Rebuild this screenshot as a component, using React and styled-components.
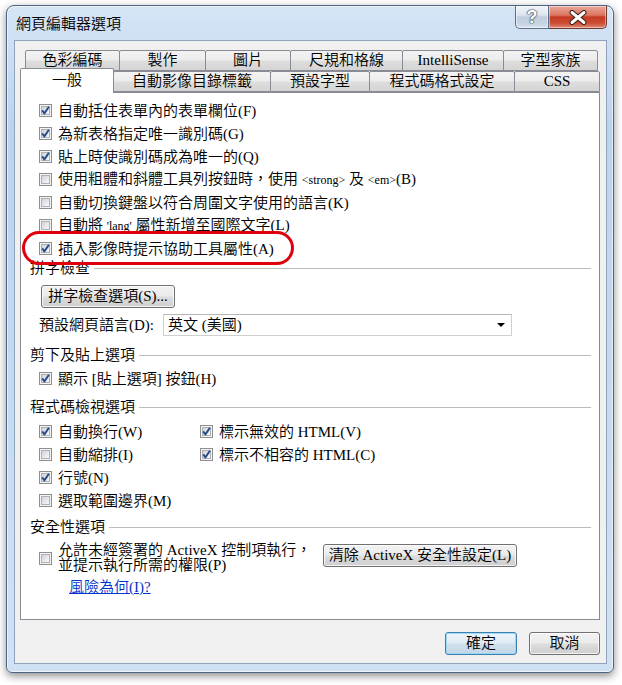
import React from 'react';
import styled, { createGlobalStyle } from 'styled-components';

const Global = createGlobalStyle`
  html, body { margin: 0; padding: 0; background: #ffffff; }
  body {
    font-family: "Liberation Serif", "Noto Sans CJK TC DemiLight", "Noto Sans CJK TC Light", "Noto Sans CJK TC", serif;
    font-size: 15px;
    font-weight: 400;
    color: #000;
  }
  * { box-sizing: border-box; }
`;

const Page = styled.div`
  width: 622px;
  height: 685px;
  padding: 5px 0 0 6px;
`;

const Window = styled.div`
  width: 608px;
  height: 668px;
  border: 1px solid #4c6482;
  border-radius: 8px 8px 6px 6px;
  background: linear-gradient(180deg, #d6e5f6 0%, #bcd3ee 18%, #c6daf1 60%, #d0e1f4 100%);
  box-shadow: 0 3px 9px rgba(0, 0, 0, 0.45), inset 0 0 0 1px rgba(255, 255, 255, 0.6);
  display: flex;
  flex-direction: column;
`;

const TitleBar = styled.div`
  height: 34px;
  display: flex;
  align-items: flex-start;
  padding: 0 6px 0 9px;
`;

const Title = styled.div`
  flex: 1;
  margin-top: 10px;
  line-height: 16px;
  font-size: 15px;
  color: #000;
`;

const CaptionButton = styled.div`
  width: ${(p) => p.$w}px;
  height: 23px;
  display: flex;
  align-items: center;
  justify-content: center;
  border: 1px solid ${(p) => (p.$close ? '#6d3a30' : '#5e7089')};
  border-top: none;
  border-left: ${(p) => (p.$close ? 'none' : undefined)};
  border-radius: ${(p) => (p.$close ? '0 0 5px 0' : '0 0 0 5px')};
  background: ${(p) =>
    p.$close
      ? 'linear-gradient(180deg, #eaa99b 0%, #dc7460 42%, #c63a22 50%, #cc4d35 78%, #e08a74 100%)'
      : 'linear-gradient(180deg, #f1f5fa 0%, #dbe4ee 42%, #bfcddd 50%, #c7d4e3 80%, #dbe5f0 100%)'};
  box-shadow: inset 0 0 0 1px rgba(255, 255, 255, 0.45);
`;

const HelpGlyph = styled.span`
  font-family: "Liberation Sans", sans-serif;
  font-weight: bold;
  font-size: 18px;
  line-height: 18px;
  color: #fff;
  text-shadow: 0 0 1px #2f3d52, 0 0 1px #2f3d52, 0 0 2px #2f3d52;
`;

const Client = styled.div`
  margin: 0 6px 0 7px;
  height: 624px;
  border: 1px solid #8fa3bd;
  background: #f0f0f0;
  padding: 9px 6px 0 5px;
  display: flex;
  flex-direction: column;
`;

const TabStrip = styled.div`
  height: 42px;
  display: flex;
  flex-direction: column;
`;

const TabRow = styled.div`
  height: 21px;
  display: flex;
  align-items: flex-end;
  padding-left: ${(p) => p.$indent}px;
`;

const Tab = styled.div`
  flex: none;
  width: ${(p) => p.$w}px;
  height: ${(p) => (p.$active ? 25 : 21)}px;
  margin-left: ${(p) => (p.$first ? 0 : -1)}px;
  margin-bottom: ${(p) => (p.$active ? -1 : 0)}px;
  border: 1px solid #898c95;
  border-bottom: ${(p) => (p.$active ? 'none' : '1px solid #898c95')};
  border-radius: 2px 2px 0 0;
  background: ${(p) =>
    p.$active
      ? '#ffffff'
      : 'linear-gradient(180deg, #f3f3f3 0%, #ececec 48%, #dedede 52%, #d4d4d4 100%)'};
  position: relative;
  z-index: ${(p) => (p.$active ? 3 : 1)};
  text-align: center;
  line-height: ${(p) => (p.$active ? 22 : 19)}px;
  font-size: 15px;
  white-space: nowrap;
`;

const Panel = styled.div`
  position: relative;
  z-index: 0;
  height: 528px;
  border: 1px solid #898c95;
  background: #ffffff;
  padding: 6px 8px 0 18px;
  display: flex;
  flex-direction: column;
`;

const CheckRow = styled.label`
  height: 23px;
  display: flex;
  align-items: center;
  gap: 6px;
  line-height: 16px;
  white-space: nowrap;
`;

const BoxWrap = styled.span`
  flex: none;
  width: 13px;
  height: 13px;
  display: block;
`;

const Small = styled.span`
  font-size: 12px;
`;

const Header = styled.div`
  height: 16px;
  margin: ${(p) => p.$mt || 0}px 0 0 -9px;
  display: flex;
  align-items: center;
  line-height: 16px;
  white-space: nowrap;
`;

const HeaderLine = styled.div`
  flex: 1;
  height: 1px;
  margin-left: 4px;
  background: #bcbcbc;
`;

const Button = styled.button`
  flex: none;
  width: ${(p) => p.$w}px;
  height: 23px;
  padding: 0;
  margin: ${(p) => p.$m || '0'};
  border: 1px solid ${(p) => (p.$default ? '#3c7fb1' : '#707070')};
  border-radius: 3px;
  background: ${(p) =>
    p.$default
      ? 'linear-gradient(180deg, #edf5fb 0%, #dfebf5 48%, #cfdfec 52%, #c4d7e7 100%)'
      : 'linear-gradient(180deg, #f2f2f2 0%, #ebebeb 48%, #dddddd 52%, #cfcfcf 100%)'};
  box-shadow: ${(p) =>
    p.$default
      ? 'inset 0 0 0 1px rgba(150, 215, 245, 0.9)'
      : 'inset 0 0 0 1px rgba(255, 255, 255, 0.75)'};
  font-family: inherit;
  font-size: 15px;
  font-weight: inherit;
  line-height: 19px;
  color: #000;
  white-space: nowrap;
`;

const LangRow = styled.div`
  margin-top: 6px;
  height: 22px;
  display: flex;
  align-items: center;
`;

const LangLabel = styled.div`
  width: 124px;
  line-height: 16px;
  white-space: nowrap;
`;

const Select = styled.div`
  width: 349px;
  height: 22px;
  border: 1px solid #cfcfcf;
  border-top-color: #b7b7b7;
  background: #fff;
  display: flex;
  align-items: center;
  justify-content: space-between;
  padding: 0 6px 0 4px;
  line-height: 16px;
`;

const Arrow = styled.span`
  width: 0;
  height: 0;
  border-left: 4px solid transparent;
  border-right: 4px solid transparent;
  border-top: 4px solid #000;
`;

const CodeGrid = styled.div`
  margin-top: 5px;
  display: grid;
  grid-template-columns: 161px auto;
  grid-auto-rows: 23px;
`;

const ActiveXRow = styled.div`
  margin-top: 8px;
  display: flex;
  align-items: flex-start;
`;

const ActiveXCheck = styled.label`
  display: flex;
  align-items: center;
  gap: 6px;
`;

const TwoLine = styled.div`
  width: 259px;
  line-height: 15px;
  white-space: nowrap;
`;

const Link = styled.a`
  margin: 7px 0 0 30px;
  line-height: 15px;
  color: #0033cc;
  text-decoration: underline;
  align-self: flex-start;
  cursor: pointer;
`;

const Annotation = styled.div`
  position: absolute;
  left: 1px;
  top: 138px;
  width: 272px;
  height: 34px;
  border: 3px solid #e0000c;
  border-radius: 17px;
  pointer-events: none;
`;

const ButtonRow = styled.div`
  margin-top: 12px;
  display: flex;
  justify-content: flex-end;
  gap: 12px;
`;

function CheckBox({ checked }) {
  return (
    <BoxWrap>
      <svg width="13" height="13" viewBox="0 0 13 13">
        <defs>
          <linearGradient id="cbgrad" x1="0" y1="0" x2="1" y2="1">
            <stop offset="0" stopColor="#cdd1d7" />
            <stop offset="1" stopColor="#fbfbfb" />
          </linearGradient>
        </defs>
        <rect x="0.5" y="0.5" width="12" height="12" fill="#f3f3f3" stroke="#8e8f8f" />
        <rect x="2.5" y="2.5" width="8" height="8" fill="url(#cbgrad)" stroke="#aeb2b8" />
        {checked && (
          <path
            d="M3.2 6.4 L5.4 9.4 L9.9 2.8"
            fill="none"
            stroke="#2a4a86"
            strokeWidth="1.9"
            strokeLinejoin="round"
          />
        )}
      </svg>
    </BoxWrap>
  );
}

function Option({ checked, children }) {
  return (
    <CheckRow>
      <CheckBox checked={checked} />
      <span>{children}</span>
    </CheckRow>
  );
}

const row1 = [
  { t: '色彩編碼', w: 95 },
  { t: '製作', w: 87 },
  { t: '圖片', w: 86 },
  { t: '尺規和格線', w: 113 },
  { t: 'IntelliSense', w: 102 },
  { t: '字型家族', w: 95 },
];

const row2 = [
  { t: '一般', w: 94, active: true },
  { t: '自動影像目錄標籤', w: 158 },
  { t: '預設字型', w: 100 },
  { t: '程式碼格式設定', w: 146 },
  { t: 'CSS', w: 86 },
];

export default function App() {
  return (
    <Page>
      <Global />
      <Window>
        <TitleBar>
          <Title>網頁編輯器選項</Title>
          <CaptionButton $w={34}>
            <HelpGlyph>?</HelpGlyph>
          </CaptionButton>
          <CaptionButton $w={58} $close>
            <svg width="20" height="15" viewBox="0 0 20 15">
              <path d="M4 2.5 L16 12.5 M16 2.5 L4 12.5" stroke="#3a1a14" strokeWidth="5" strokeLinecap="round" />
              <path d="M4 2.5 L16 12.5 M16 2.5 L4 12.5" stroke="#ffffff" strokeWidth="3" strokeLinecap="round" />
            </svg>
          </CaptionButton>
        </TitleBar>
        <Client>
          <TabStrip>
            <TabRow $indent={5}>
              {row1.map((t, i) => (
                <Tab key={t.t} $w={t.w} $first={i === 0}>
                  {t.t}
                </Tab>
              ))}
            </TabRow>
            <TabRow $indent={0}>
              {row2.map((t, i) => (
                <Tab key={t.t} $w={t.w} $first={i === 0} $active={t.active}>
                  {t.t}
                </Tab>
              ))}
            </TabRow>
          </TabStrip>
          <Panel>
            <Option checked>自動括住表單內的表單欄位(F)</Option>
            <Option checked>為新表格指定唯一識別碼(G)</Option>
            <Option checked>貼上時使識別碼成為唯一的(Q)</Option>
            <Option>
              使用粗體和斜體工具列按鈕時，使用 <Small>&lt;strong&gt;</Small> 及 <Small>&lt;em&gt;</Small>(B)
            </Option>
            <Option>自動切換鍵盤以符合周圍文字使用的語言(K)</Option>
            <Option>
              自動將 <Small>'lang'</Small> 屬性新增至國際文字(L)
            </Option>
            <Option checked>插入影像時提示協助工具屬性(A)</Option>

            <Header>
              拼字檢查
              <HeaderLine />
            </Header>
            <Button $w={134} $m="9px 0 0 2px">
              拼字檢查選項(S)...
            </Button>
            <LangRow>
              <LangLabel>預設網頁語言(D):</LangLabel>
              <Select>
                <span>英文 (美國)</span>
                <Arrow />
              </Select>
            </LangRow>

            <Header $mt={11}>
              剪下及貼上選項
              <HeaderLine />
            </Header>
            <CheckRow style={{ marginTop: 4 }}>
              <CheckBox checked />
              <span>顯示 [貼上選項] 按鈕(H)</span>
            </CheckRow>

            <Header $mt={9}>
              程式碼檢視選項
              <HeaderLine />
            </Header>
            <CodeGrid>
              <Option checked>自動換行(W)</Option>
              <Option checked>標示無效的 HTML(V)</Option>
              <Option>自動縮排(I)</Option>
              <Option checked>標示不相容的 HTML(C)</Option>
              <Option checked>行號(N)</Option>
              <span />
              <Option>選取範圍邊界(M)</Option>
            </CodeGrid>

            <Header $mt={7}>
              安全性選項
              <HeaderLine />
            </Header>
            <ActiveXRow>
              <ActiveXCheck>
                <CheckBox />
                <TwoLine>
                  允許未經簽署的 ActiveX 控制項執行，
                  <br />
                  並提示執行所需的權限(P)
                </TwoLine>
              </ActiveXCheck>
              <Button $w={194} $m="1px 0 0 6px">
                清除 ActiveX 安全性設定(L)
              </Button>
            </ActiveXRow>
            <Link>風險為何(I)?</Link>

            <Annotation />
          </Panel>
          <ButtonRow>
            <Button $w={72} $default>
              確定
            </Button>
            <Button $w={71}>取消</Button>
          </ButtonRow>
        </Client>
      </Window>
    </Page>
  );
}
